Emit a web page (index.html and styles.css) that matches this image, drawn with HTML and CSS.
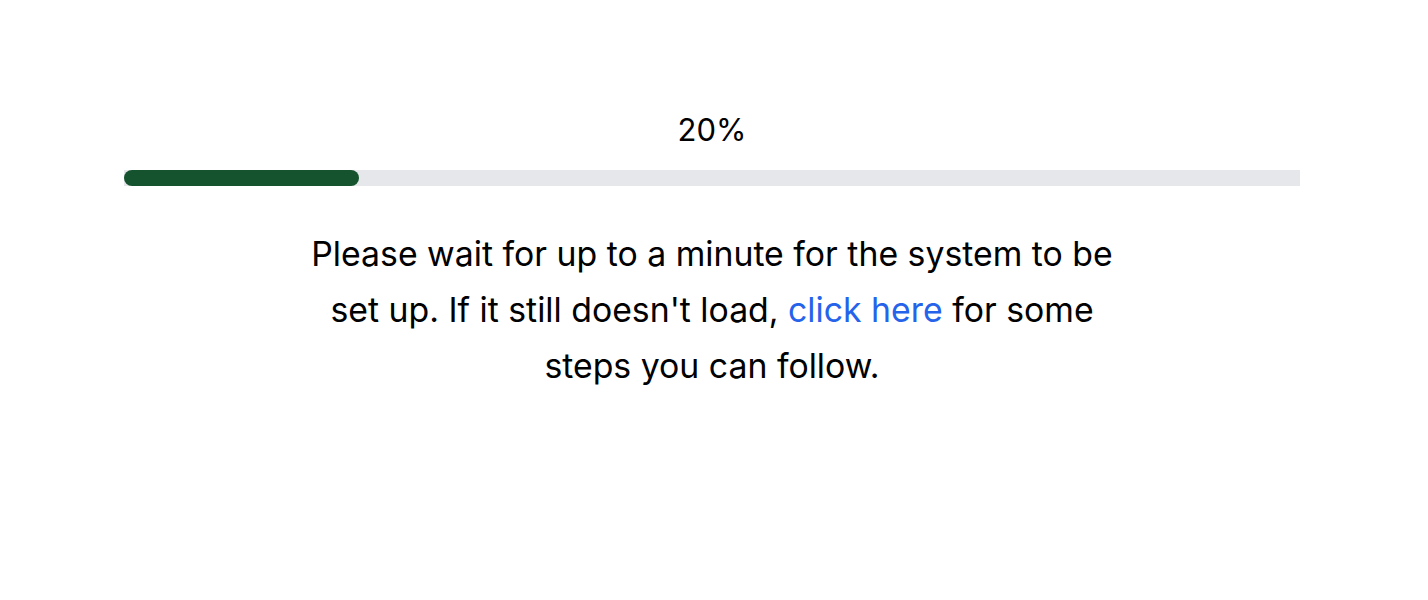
FILE: index.html
```html
<!DOCTYPE html>
<html lang="en">
<head>
    <meta charset="UTF-8">
    <meta name="viewport" content="width=device-width, initial-scale=1.0">
    <title>Setting up</title>
    <link rel="stylesheet" href="styles.css">
</head>
<body>
    <main class="loader">
        <div class="progress-label" id="progressLabel">20%</div>
        <div class="progress-track">
            <div class="progress-fill" id="progressFill" style="width: 20%"></div>
        </div>
        <p class="loader-message">
            Please wait for up to a minute for the system to be set up. If it still doesn't load,
            <a href="#" class="help-link">click here</a> for some steps you can follow.
        </p>
    </main>
</body>
</html>
```

FILE: styles.css
```css
body {
    margin: 0;
    padding: 0 4px 0 0;
    font-family: Inter, "Liberation Sans", sans-serif;
    color: #000;
    background-color: #fff;
}

.loader {
    display: flex;
    flex-direction: column;
    align-items: center;
    margin: 0 124px;
    padding-top: 110px;
}

.progress-label {
    font-size: 31px;
    line-height: 40px;
    margin-bottom: 20px;
}

.progress-track {
    width: 100%;
    height: 16px;
    background-color: #e5e7eb;
}

.progress-fill {
    height: 100%;
    background-color: #14532d;
    border-radius: 8px;
}

.loader-message {
    max-width: 840px;
    margin: 40px 0 0;
    font-size: 33.8px;
    line-height: 56px;
    text-align: center;
}

.help-link {
    color: #2563eb;
    text-decoration: none;
}
```
